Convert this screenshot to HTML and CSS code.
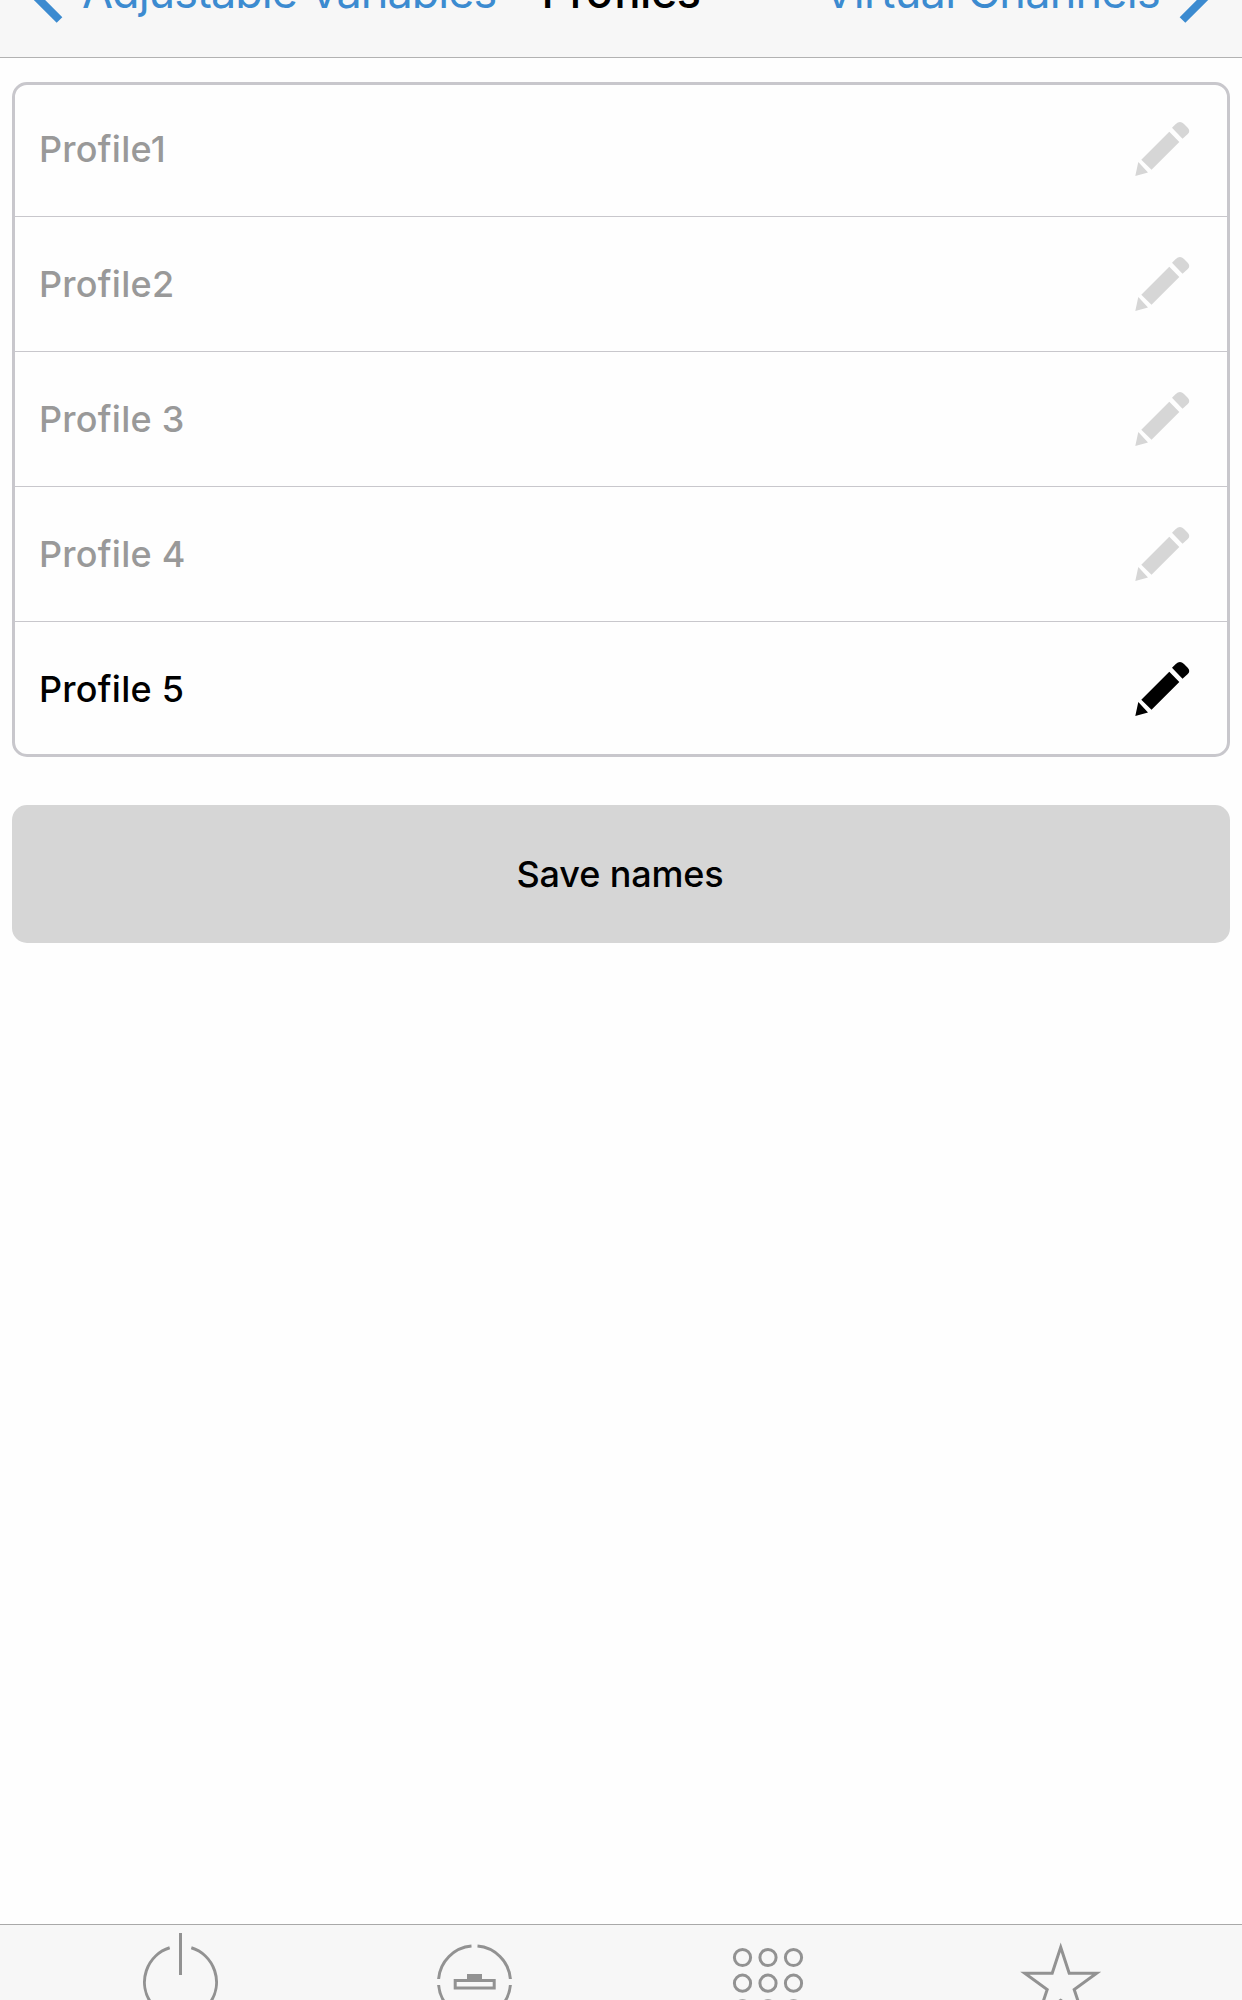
FILE: index.html
```html
<!DOCTYPE html>
<html lang="en">
<head>
    <meta charset="UTF-8">
    <meta name="viewport" content="width=device-width, initial-scale=1.0">
    <title>Profiles</title>
    <link rel="stylesheet" href="styles.css">
</head>
<body>
    <!-- Shared pencil icon -->
    <svg class="symbols">
        <symbol id="pencil" viewBox="0 0 56 56">
            <path d="M0.3 55 L3.3 41 L13 51.5 Z M6.3 38.8 L34.3 10.7 L44.3 21 L16.5 48.8 Z M37 6.7 L40.8 3 Q45 -1.2 49 3 L52.5 6.5 Q56 10.2 52.5 13.2 L47.5 17.7 Z"/>
        </symbol>
    </svg>

    <header class="navbar">
        <a class="nav-link nav-prev" href="#">
            <svg class="chevron" viewBox="0 0 40 64"><path d="M34.5 4 L6.5 32 L34.5 60"/></svg>
            <span>Adjustable Variables</span>
        </a>
        <h1>Profiles</h1>
        <a class="nav-link nav-next" href="#">
            <span>Virtual Channels</span>
            <svg class="chevron" viewBox="0 0 40 64"><path d="M5.5 4 L33.5 32 L5.5 60"/></svg>
        </a>
    </header>

    <main>
        <ul class="profile-list">
            <li class="profile disabled"><span>Profile1</span><svg class="pencil"><use href="#pencil"/></svg></li>
            <li class="profile disabled"><span>Profile2</span><svg class="pencil"><use href="#pencil"/></svg></li>
            <li class="profile disabled"><span>Profile 3</span><svg class="pencil"><use href="#pencil"/></svg></li>
            <li class="profile disabled"><span>Profile 4</span><svg class="pencil"><use href="#pencil"/></svg></li>
            <li class="profile"><span>Profile 5</span><svg class="pencil"><use href="#pencil"/></svg></li>
        </ul>
        <button class="save-button" type="button">Save names</button>
    </main>

    <!-- Bottom tab bar -->
    <nav class="tabbar">
        <a class="tab" href="#">
            <svg viewBox="0 0 90 100">
                <path d="M34.7 22.8 A36 36 0 1 0 56.3 22.8"/>
                <path d="M45.5 8 V50"/>
            </svg>
        </a>
        <a class="tab" href="#">
            <svg viewBox="0 0 90 100">
                <path d="M48.5 21.1 A36 36 0 0 1 81.4 54 M81.4 60 A36 36 0 0 1 48.5 92.9 M42.5 92.9 A36 36 0 0 1 9.6 60 M9.6 54 A36 36 0 0 1 42.5 21.1"/>
                <rect x="26.2" y="55.5" width="39" height="7.5"/>
                <path class="solid" d="M38 49 H53 V56 H38 Z"/>
            </svg>
        </a>
        <a class="tab" href="#">
            <svg viewBox="0 0 90 100">
                <circle cx="19.5" cy="32.5" r="8.1"/>
                <circle cx="45" cy="32.5" r="8.1"/>
                <circle cx="70.5" cy="32.5" r="8.1"/>
                <circle cx="19.5" cy="58.2" r="8.1"/>
                <circle cx="45" cy="58.2" r="8.1"/>
                <circle cx="70.5" cy="58.2" r="8.1"/>
                <circle cx="19.5" cy="83.8" r="8.1"/>
                <circle cx="45" cy="83.8" r="8.1"/>
                <circle cx="70.5" cy="83.8" r="8.1"/>
            </svg>
        </a>
        <a class="tab" href="#">
            <svg viewBox="0 0 90 100">
                <path d="M43.7 22.3 L52.2 48.3 H79.6 L57.2 64.5 L66 91 L43.7 75.3 L21.4 91 L30.2 64.5 L7.8 48.3 H35.2 Z"/>
            </svg>
        </a>
    </nav>
</body>
</html>
```
FILE: styles.css
```css
* {
    box-sizing: border-box;
}

body {
    display: flex;
    flex-direction: column;
    height: 2000px;
    margin: 0;
    overflow: hidden;
    background-color: #fefefe;
    color: #000;
    font-family: Inter, "Liberation Sans", sans-serif;
}

.symbols {
    display: none;
}

/* The bar is partly scrolled off the top */
.navbar {
    display: grid;
    grid-template-columns: 1fr auto 1fr;
    align-items: center;
    flex-shrink: 0;
    height: 132px;
    margin-top: -74px;
    padding: 0 25px;
    background-color: #f7f7f7;
    border-bottom: 1px solid #b2b2b2;
    font-size: 45px;
    white-space: nowrap;
}

.navbar h1 {
    margin: 0;
    font-size: 45px;
    font-weight: 550;
    letter-spacing: -0.5px;
}

.nav-link {
    display: flex;
    align-items: center;
    gap: 17px;
    color: #3c8bd0;
    text-decoration: none;
}

.nav-prev {
    letter-spacing: -0.97px;
}

.nav-next {
    justify-content: flex-end;
    letter-spacing: -0.75px;
}

.chevron {
    width: 40px;
    height: 64px;
    fill: none;
    stroke: #3c8bd0;
    stroke-width: 8;
}

main {
    flex: 1;
    padding: 24px 12px;
}

.profile-list {
    margin: 0 0 48px;
    padding: 0;
    list-style: none;
    border: 3px solid #c8c7cc;
    border-radius: 15px;
}

.profile {
    display: flex;
    align-items: center;
    justify-content: space-between;
    height: 135px;
    padding: 0 36px 0 24px;
    border-bottom: 1px solid #c8c7cc;
    font-size: 36px;
    font-weight: 500;
    letter-spacing: 0.25px;
}

.profile:first-child {
    margin-top: -3px;
}

.profile:last-child {
    margin-bottom: -3px;
    border-bottom-color: transparent;
}

.disabled {
    color: #999;
}

.pencil {
    width: 56px;
    height: 56px;
    fill: #000;
}

.disabled .pencil {
    fill: #d6d6d6;
}

.save-button {
    display: block;
    width: 100%;
    height: 138px;
    padding: 0 2px 0 0;
    border: none;
    border-radius: 15px;
    background-color: #d6d6d6;
    color: #000;
    font-family: inherit;
    font-size: 36px;
    font-weight: 500;
    letter-spacing: -0.15px;
}

.tabbar {
    display: flex;
    flex-shrink: 0;
    height: 76px;
    padding: 0 33px;
    overflow: hidden;
    background-color: #f7f7f7;
    border-top: 1px solid #a9a9a9;
}

.tab {
    display: flex;
    flex: 1;
    justify-content: center;
}

.tab svg {
    flex-shrink: 0;
    width: 90px;
    height: 100px;
    fill: none;
    stroke: #929292;
    stroke-width: 3;
    stroke-miterlimit: 10;
}

.tab .solid {
    fill: #929292;
    stroke: none;
}
```
